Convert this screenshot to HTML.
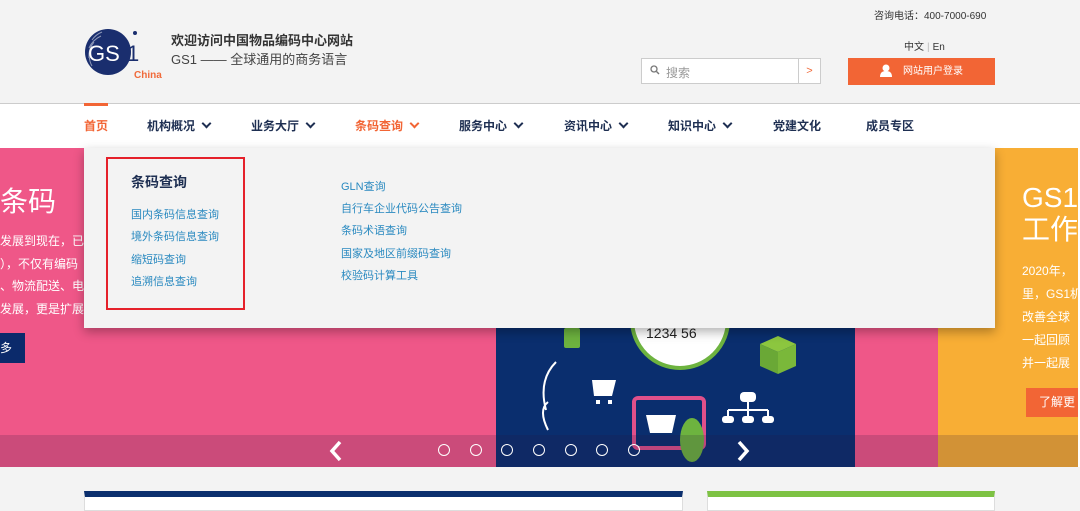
<!DOCTYPE html>
<html><head><meta charset="utf-8"><style>
*{margin:0;padding:0;box-sizing:border-box}
body{width:1080px;height:506px;overflow:hidden;background:#f3f3f3;font-family:"Liberation Sans","Noto Sans CJK SC",sans-serif;position:relative}
.a{position:absolute}
.nav span{position:absolute;top:117px;font-size:12px;font-weight:bold;color:#1e2f52;white-space:nowrap}
.chev{display:inline-block;width:7px;height:7px;border-right:2px solid currentColor;border-bottom:2px solid currentColor;transform:rotate(45deg);margin-left:8px;position:relative;top:-3px}
.dd a{display:block;color:#2a8ac0;font-size:11px;text-decoration:none;position:absolute;white-space:nowrap}
.dot{position:absolute;top:444px;width:12px;height:12px;border:1.5px solid #fff;border-radius:50%}
</style></head><body>
<!-- header -->
<svg class="a" style="left:84px;top:28px" width="82" height="54" viewBox="0 0 82 54">
<circle cx="24" cy="24" r="23" fill="#1a2e6e"/>
<g fill="none" stroke="#fff" stroke-width="1" opacity=".5">
<path d="M8 12a22 22 0 0 1 10-8"/><path d="M5 20a24 24 0 0 1 12-12"/><path d="M5 30a22 22 0 0 1 5-16"/><path d="M8 38a20 20 0 0 1 0-20"/></g>
<text x="4" y="33" font-size="22" fill="#fff" font-family="Liberation Sans">GS</text>
<text x="43" y="33" font-size="22" fill="#1a2e6e" font-family="Liberation Sans">1</text>
<circle cx="51" cy="5" r="2" fill="#1a2e6e"/>
<text x="50" y="50" font-size="10" font-weight="bold" fill="#f06a3a" font-family="Liberation Sans">China</text>
</svg>
<div class="a" style="left:171px;top:30px;font-size:13px;font-weight:bold;color:#333">欢迎访问中国物品编码中心网站</div>
<div class="a" style="left:171px;top:49px;font-size:13px;color:#444">GS1 —— 全球通用的商务语言</div>
<div class="a" style="left:874px;top:7px;font-size:10px;color:#333">咨询电话：400-7000-690</div>
<div class="a" style="left:904px;top:38px;font-size:10px;color:#333">中文<span style="color:#bbb;margin:0 3px">|</span>En</div>
<div class="a" style="left:641px;top:58px;width:158px;height:26px;border:1px solid #ccc;background:#fff"></div>
<div class="a" style="left:799px;top:58px;width:22px;height:26px;border:1px solid #ccc;border-left:none;background:#fff;color:#f06a3a;font-size:11px;text-align:center;line-height:24px">&gt;</div>
<svg class="a" style="left:650px;top:65px" width="10" height="10"><circle cx="4" cy="4" r="3" stroke="#777" stroke-width="1.3" fill="none"/><path d="M6.5 6.5 9 9" stroke="#777" stroke-width="1.4"/></svg>
<div class="a" style="left:666px;top:64px;font-size:12px;color:#999">搜索</div>
<div class="a" style="left:848px;top:58px;width:147px;height:27px;background:#f26535;color:#fff;font-size:10px;line-height:27px;padding-left:55px">网站用户登录</div>
<svg class="a" style="left:880px;top:64px" width="12" height="13"><circle cx="6" cy="4" r="3.5" fill="#fff"/><path d="M0 13c0-5 3-6 6-6s6 1 6 6z" fill="#fff"/></svg>
<!-- nav -->
<div class="a" style="left:0;top:103px;width:1080px;height:45px;background:#fff;border-top:1px solid #ccc"></div>
<div class="a" style="left:84px;top:103px;width:24px;height:3px;background:#f26535"></div>
<div class="nav">
<span style="left:84px;color:#f26535">首页</span>
<span style="left:147px">机构概况<i class="chev"></i></span>
<span style="left:251px">业务大厅<i class="chev"></i></span>
<span style="left:355px;color:#f26535">条码查询<i class="chev"></i></span>
<span style="left:459px">服务中心<i class="chev"></i></span>
<span style="left:564px">资讯中心<i class="chev"></i></span>
<span style="left:668px">知识中心<i class="chev"></i></span>
<span style="left:773px">党建文化</span>
<span style="left:866px">成员专区</span>
</div>
<!-- banner -->
<div class="a" style="left:0;top:148px;width:938px;height:319px;background:#ef5788"></div>
<div class="a" style="left:938px;top:148px;width:140px;height:319px;background:#f8ae35"></div>
<div class="a" style="left:1078px;top:148px;width:2px;height:319px;background:#fff"></div>
<div class="a" style="left:0;top:180px;font-size:28px;color:#fff">条码</div>
<div class="a" style="left:0;top:230px;font-size:12px;color:#fff;line-height:22.5px;white-space:nowrap">发展到现在，已<br>），不仅有编码<br>、物流配送、电<br>发展，更是扩展</div>
<div class="a" style="left:0;top:333px;width:25px;height:30px;background:#0b2a6b;color:#fff;font-size:12px;line-height:30px">多</div>
<div class="a" style="left:1022px;top:182px;font-size:28px;color:#fff;line-height:32px">GS1<br>工作</div>
<div class="a" style="left:1022px;top:260px;font-size:12px;color:#fff;line-height:23px;white-space:nowrap">2020年，<br>里，GS1机<br>改善全球<br>一起回顾<br>并一起展</div>
<div class="a" style="left:1026px;top:388px;width:52px;height:29px;background:#f26535;color:#fff;font-size:12px;line-height:29px;padding-left:13px;white-space:nowrap;overflow:hidden">了解更</div>
<!-- blue image -->
<div class="a" style="left:496px;top:300px;width:359px;height:167px;background:#0a2e6e;overflow:hidden">
<svg width="359" height="167" viewBox="0 0 359 167">
<circle cx="184" cy="20" r="48" fill="#fff" stroke="#6db33f" stroke-width="4"/>
<text x="150" y="38" font-size="14" fill="#222" font-family="Liberation Sans">1234  56</text>
<rect x="68" y="28" width="16" height="20" rx="2" fill="#6db33f"/>
<path d="M264 44l18-8 18 8-18 8z" fill="#8cc63f"/><path d="M264 44v22l18 8v-22z" fill="#6aa836"/><path d="M300 44v22l-18 8v-22z" fill="#7ab83a"/>
<path d="M50 110q-8-30 10-48M52 130q-10-20 0-28" stroke="#fff" stroke-width="2" fill="none"/>
<path d="M96 80h24l-4 16h-18z M100 100h4v4h-4z M112 100h4v4h-4z" fill="#fff"/>
<rect x="138" y="98" width="70" height="50" rx="4" fill="none" stroke="#e0508a" stroke-width="4"/>
<path d="M150 115h30l-4 18h-22z" fill="#fff"/>
<ellipse cx="196" cy="140" rx="12" ry="22" fill="#6db33f"/>
<rect x="244" y="92" width="16" height="10" rx="4" fill="#fff"/><path d="M252 102v8M232 110h40M232 110v6M252 110v6M272 110v6" stroke="#fff" stroke-width="2"/>
<rect x="226" y="116" width="12" height="7" rx="3" fill="#fff"/><rect x="246" y="116" width="12" height="7" rx="3" fill="#fff"/><rect x="266" y="116" width="12" height="7" rx="3" fill="#fff"/>
</svg></div>
<!-- bottom strip -->
<div class="a" style="left:0;top:435px;width:1078px;height:32px;background:rgba(40,20,60,.18)"></div>
<svg class="a" style="left:328px;top:440px" width="16" height="22"><path d="M12 2 4 11l8 9" stroke="#fff" stroke-width="3.5" fill="none"/></svg>
<svg class="a" style="left:735px;top:440px" width="16" height="22"><path d="M4 2l8 9-8 9" stroke="#fff" stroke-width="3.5" fill="none"/></svg>
<div class="dot" style="left:438px"></div><div class="dot" style="left:470px"></div><div class="dot" style="left:501px"></div><div class="dot" style="left:533px"></div><div class="dot" style="left:565px"></div><div class="dot" style="left:596px"></div><div class="dot" style="left:628px"></div>
<!-- dropdown -->
<div class="a" style="left:84px;top:148px;width:911px;height:180px;background:#f3f3f3;box-shadow:0 4px 10px rgba(0,0,0,.3)"></div>
<div class="a" style="left:106px;top:157px;width:139px;height:153px;border:2px solid #e5202a"></div>
<div class="dd">
<div class="a" style="left:131px;top:172px;font-size:14px;font-weight:bold;color:#1e2f52">条码查询</div>
<a style="left:131px;top:206px">国内条码信息查询</a>
<a style="left:131px;top:228px">境外条码信息查询</a>
<a style="left:131px;top:251px">缩短码查询</a>
<a style="left:131px;top:273px">追溯信息查询</a>
<a style="left:341px;top:178px">GLN查询</a>
<a style="left:341px;top:200px">自行车企业代码公告查询</a>
<a style="left:341px;top:222px">条码术语查询</a>
<a style="left:341px;top:245px">国家及地区前缀码查询</a>
<a style="left:341px;top:267px">校验码计算工具</a>
</div>
<!-- bottom panels -->
<div class="a" style="left:84px;top:491px;width:599px;height:20px;background:#fff;border:1px solid #ddd;border-top:6px solid #0b2f6e"></div>
<div class="a" style="left:707px;top:491px;width:288px;height:20px;background:#fff;border:1px solid #ddd;border-top:6px solid #7dc243"></div>
</body></html>
